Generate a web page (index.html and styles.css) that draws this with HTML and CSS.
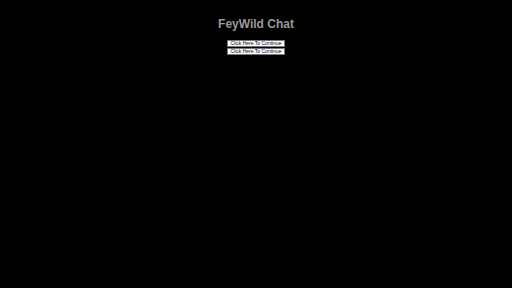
FILE: index.html
```html
<!DOCTYPE html>
<html>
<head>
<meta charset="utf-8">
<link rel="stylesheet" href="styles.css">
</head>
<body>
<main class="page">
  <h1 class="title">FeyWild Chat</h1>
  <div class="actions">
    <button class="btn">Click Here To Continue</button>
    <button class="btn">Click Here To Continue</button>
  </div>
</main>
</body>
</html>
```

FILE: styles.css
```css
html, body {
  margin: 0;
  padding: 0;
  background: #000;
  height: 100%;
}
.page {
  display: flex;
  flex-direction: column;
  align-items: center;
  font-family: "Liberation Sans", Arial, sans-serif;
}
.title {
  margin: 17px 0 0 0;
  font-size: 12px;
  line-height: 14px;
  font-weight: bold;
  color: #999;
}
.actions {
  margin-top: 9px;
  display: flex;
  flex-direction: column;
  align-items: center;
  gap: 1px;
}
.btn {
  font-family: "Liberation Sans", Arial, sans-serif;
  font-size: 5px;
  line-height: 5px;
  padding: 0 2px;
  margin: 0;
  background: #fff;
  color: #000;
  border: 1px solid #777;
  border-radius: 0;
  height: 7px;
}
```
